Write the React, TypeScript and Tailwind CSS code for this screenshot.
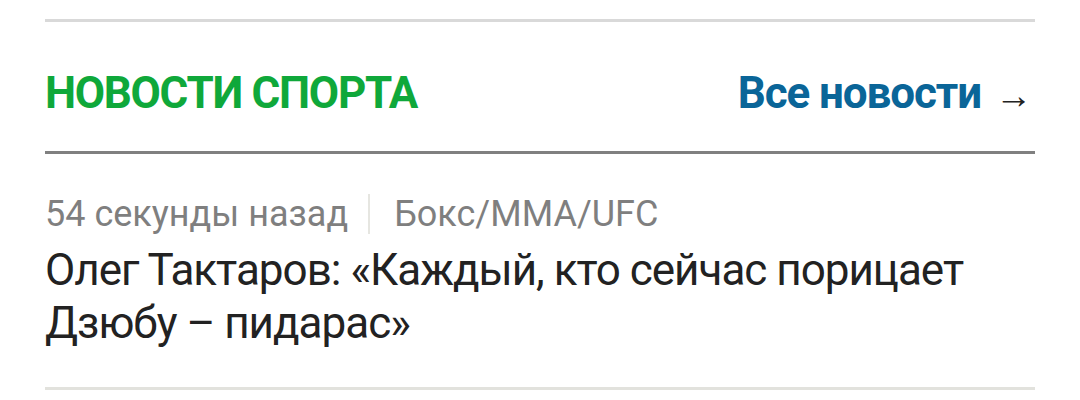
export default function App() {
  return (
    <div className="min-h-screen bg-white font-['Roboto',sans-serif]">
      <div className="mx-[45px] pt-[19px]">
        <div className="h-[3px] bg-[#d9d9d9]" />

        {/* Section header */}
        <div className="flex items-baseline justify-between pt-[49px] pb-[36px]">
          <h2 className="text-[44px] leading-[44px] font-bold tracking-[-1.3px] text-[#0fa83a]">
            НОВОСТИ СПОРТА
          </h2>
          <a href="#" className="flex items-baseline gap-[14px] pr-[3px]">
            <span className="text-[44px] leading-[44px] font-bold tracking-[-1.1px] text-[#0a6598]">
              Все новости
            </span>
            <span className="text-[37px] leading-[37px] text-[#222]">→</span>
          </a>
        </div>
        <div className="h-[3px] bg-[#808080]" />

        {/* News item */}
        <div className="pt-[40px] pb-[37px]">
          <div className="flex items-center text-[36px] leading-[40px] text-[#7f7f7f]">
            <span>54 секунды назад</span>
            <span className="ml-[20px] mr-[24px] h-[40px] w-[2px] bg-[#e6e6e1]" />
            <span>Бокс/MMA/UFC</span>
          </div>
          <p className="mt-[10px] text-[44px] leading-[53px] tracking-[-1px] text-[#222]">
            Олег Тактаров: «Каждый, кто сейчас порицает
            <br />
            Дзюбу – пидарас»
          </p>
        </div>
        <div className="h-[3px] bg-[#e2e2dd]" />
      </div>
    </div>
  );
}
